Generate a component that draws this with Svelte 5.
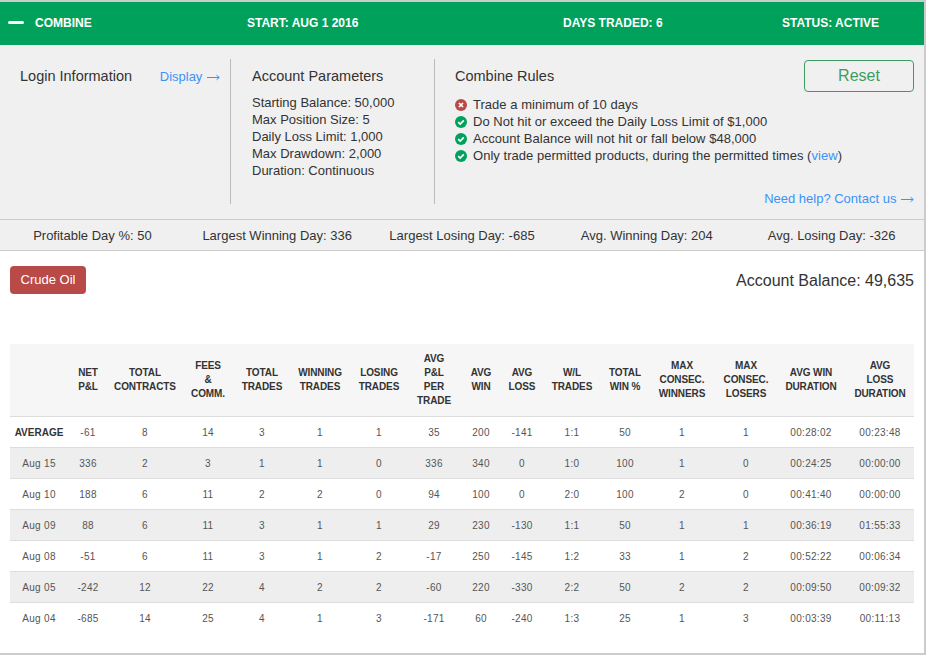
<script>
  const headers = [
    [],
    ['NET', 'P&L'],
    ['TOTAL', 'CONTRACTS'],
    ['FEES', '&', 'COMM.'],
    ['TOTAL', 'TRADES'],
    ['WINNING', 'TRADES'],
    ['LOSING', 'TRADES'],
    ['AVG', 'P&L', 'PER', 'TRADE'],
    ['AVG', 'WIN'],
    ['AVG', 'LOSS'],
    ['W/L', 'TRADES'],
    ['TOTAL', 'WIN %'],
    ['MAX', 'CONSEC.', 'WINNERS'],
    ['MAX', 'CONSEC.', 'LOSERS'],
    ['AVG WIN', 'DURATION'],
    ['AVG', 'LOSS', 'DURATION'],
  ];
  const widths = [58, 40, 74, 52, 56, 60, 58, 52, 42, 40, 60, 46, 68, 60, 70, 68];
  const rows = [
    ['AVERAGE', -61, 8, 14, 3, 1, 1, 35, 200, -141, '1:1', 50, 1, 1, '00:28:02', '00:23:48'],
    ['Aug 15', 336, 2, 3, 1, 1, 0, 336, 340, 0, '1:0', 100, 1, 0, '00:24:25', '00:00:00'],
    ['Aug 10', 188, 6, 11, 2, 2, 0, 94, 100, 0, '2:0', 100, 2, 0, '00:41:40', '00:00:00'],
    ['Aug 09', 88, 6, 11, 3, 1, 1, 29, 230, -130, '1:1', 50, 1, 1, '00:36:19', '01:55:33'],
    ['Aug 08', -51, 6, 11, 3, 1, 2, -17, 250, -145, '1:2', 33, 1, 2, '00:52:22', '00:06:34'],
    ['Aug 05', -242, 12, 22, 4, 2, 2, -60, 220, -330, '2:2', 50, 2, 2, '00:09:50', '00:09:32'],
    ['Aug 04', -685, 14, 25, 4, 1, 3, -171, 60, -240, '1:3', 25, 1, 3, '00:03:39', '00:11:13'],
  ];
  const params = [
    'Starting Balance: 50,000',
    'Max Position Size: 5',
    'Daily Loss Limit: 1,000',
    'Max Drawdown: 2,000',
    'Duration: Continuous',
  ];
  const stats = [
    'Profitable Day %: 50',
    'Largest Winning Day: 336',
    'Largest Losing Day: -685',
    'Avg. Winning Day: 204',
    'Avg. Losing Day: -326',
  ];
</script>

{#snippet okIcon()}
  <svg class="ico" viewBox="0 0 12 12"><circle cx="6" cy="6" r="6" fill="#00a25b" /><path d="M3.2 6.1l2 2 3.6-3.7" stroke="#fff" stroke-width="1.7" fill="none" /></svg>
{/snippet}

{#snippet arrow()}
  <svg class="arrow" viewBox="0 0 13 7"><path d="M0 3.5h12M9.5 1.2l2.8 2.3-2.8 2.3" stroke="#3b93f7" fill="none" /></svg>
{/snippet}

<div class="page">
  <header class="topbar">
    <span class="dash"></span>
    <span class="t-name">COMBINE</span>
    <span class="t-start">START: AUG 1 2016</span>
    <span class="t-days">DAYS TRADED: 6</span>
    <span>STATUS: ACTIVE</span>
  </header>

  <section class="panel">
    <div class="col login">
      <h3>Login Information</h3>
      <a class="link display">Display {@render arrow()}</a>
    </div>
    <div class="col account">
      <h3>Account Parameters</h3>
      <ul>
        {#each params as p}
          <li>{p}</li>
        {/each}
      </ul>
    </div>
    <div class="col rules">
      <div class="rules-head">
        <h3>Combine Rules</h3>
        <button class="reset">Reset</button>
      </div>
      <ul>
        <li>
          <svg class="ico" viewBox="0 0 12 12"><circle cx="6" cy="6" r="6" fill="#b94a48" /><path d="M4 4l4 4M8 4l-4 4" stroke="#fff" stroke-width="1.7" fill="none" /></svg>
          <span>Trade a minimum of 10 days</span>
        </li>
        <li>
          {@render okIcon()}
          <span>Do Not hit or exceed the Daily Loss Limit of $1,000</span>
        </li>
        <li>
          {@render okIcon()}
          <span>Account Balance will not hit or fall below $48,000</span>
        </li>
        <li>
          {@render okIcon()}
          <span>Only trade permitted products, during the permitted times (<a class="link">view</a>)</span>
        </li>
      </ul>
      <a class="link help">Need help? Contact us {@render arrow()}</a>
    </div>
  </section>

  <section class="stats">
    {#each stats as s}
      <span>{s}</span>
    {/each}
  </section>

  <section class="balance-row">
    <button class="crude">Crude Oil</button>
    <span class="balance">Account Balance: 49,635</span>
  </section>

  <table>
    <colgroup>
      {#each widths as w}
        <col style="width: {w}px" />
      {/each}
    </colgroup>
    <thead>
      <tr>
        {#each headers as h}
          <th>
            {#each h as line}
              <div>{line}</div>
            {/each}
          </th>
        {/each}
      </tr>
    </thead>
    <tbody>
      {#each rows as row, i}
        <tr class:odd={i % 2 === 1}>
          {#each row as cell, j}
            <td class:avg={i === 0 && j === 0}>{cell}</td>
          {/each}
        </tr>
      {/each}
    </tbody>
  </table>
</div>

<style>
  :global(body) {
    background: #fff;
    font-family: 'Liberation Sans', Arial, sans-serif;
  }
  .page {
    width: 926px;
    height: 655px;
    box-sizing: border-box;
    border-top: 2px solid #ccc;
    border-right: 2px solid #ccc;
    border-bottom: 2px solid #ccc;
    overflow: hidden;
    color: #333;
  }
  .topbar {
    display: flex;
    align-items: center;
    height: 43px;
    box-sizing: border-box;
    padding: 0 0 2px 8px;
    background: #00a25b;
    color: #fff;
    font-size: 12px;
    font-weight: bold;
  }
  .dash {
    width: 16px;
    height: 3px;
    margin: -1px 11px 0 0;
    border-radius: 2px;
    background: #fff;
  }
  .t-name { width: 212px; }
  .t-start { width: 316px; }
  .t-days { width: 219px; }

  .panel {
    display: flex;
    height: 175px;
    box-sizing: border-box;
    padding-top: 14px;
    background: #f0f0f0;
    border-bottom: 1px solid #ccc;
    font-size: 13px;
    line-height: 17px;
  }
  .col {
    height: 145px;
    box-sizing: border-box;
  }
  .col h3 {
    margin: 0;
    padding-top: 8px;
    font-size: 14.5px;
    font-weight: normal;
    line-height: 18px;
  }
  .col ul {
    margin: 0;
    padding: 0;
    list-style: none;
  }
  .login {
    display: flex;
    justify-content: space-between;
    align-items: flex-start;
    width: 231px;
    padding: 0 10px 0 20px;
    border-right: 1px solid #bbb;
  }
  .account {
    width: 204px;
    padding-left: 21px;
    border-right: 1px solid #bbb;
  }
  .account ul {
    margin-top: 9px;
  }
  .rules {
    display: flex;
    flex-direction: column;
    flex: 1;
    padding: 0 10px 0 20px;
  }
  .rules-head {
    display: flex;
    justify-content: space-between;
    align-items: flex-start;
    height: 33px;
  }
  .rules ul {
    margin-top: 4px;
  }
  .rules li {
    display: flex;
    align-items: center;
    letter-spacing: 0.03px;
  }
  .ico {
    width: 12px;
    height: 12px;
    margin-right: 6px;
    flex: none;
  }
  .arrow {
    width: 13px;
    height: 7px;
    margin-left: 1px;
  }
  .link {
    color: #3b93f7;
  }
  .display {
    padding-top: 9px;
  }
  .help {
    margin: auto 0 -3px 0;
    align-self: flex-end;
  }
  .reset {
    width: 110px;
    height: 32px;
    margin-top: 1px;
    padding: 0;
    border: 1px solid #3d9c63;
    border-radius: 4px;
    background: transparent;
    color: #3d9c63;
    font: 16px 'Liberation Sans', Arial, sans-serif;
  }
  .stats {
    display: grid;
    grid-template-columns: repeat(5, 1fr);
    height: 31px;
    box-sizing: border-box;
    background: #f0f0f0;
    border-bottom: 1px solid #ccc;
    font-size: 13px;
    line-height: 32px;
    text-align: center;
  }
  .balance-row {
    display: flex;
    justify-content: space-between;
    align-items: flex-start;
    height: 78px;
    padding: 15px 10px 0;
  }
  .crude {
    width: 76px;
    height: 28px;
    padding: 0 0 2px;
    border: none;
    border-radius: 4px;
    background: #b94a48;
    color: #fff;
    font: 13px 'Liberation Sans', Arial, sans-serif;
  }
  .balance {
    font-size: 16px;
    line-height: 29px;
  }
  table {
    width: 904px;
    margin-left: 10px;
    table-layout: fixed;
    border-collapse: collapse;
    font-size: 10px;
    letter-spacing: 0.3px;
    color: #555;
  }
  th {
    height: 72px;
    padding: 0;
    background: #f6f6f6;
    border-bottom: 1px solid #ddd;
    color: #333;
    font-weight: bold;
    line-height: 14px;
    letter-spacing: -0.1px;
  }
  td {
    height: 30px;
    padding: 0;
    text-align: center;
    border-bottom: 1px solid #ddd;
  }
  tr:last-child td {
    border-bottom: none;
  }
  tr.odd td {
    background: #eee;
  }
  td.avg {
    font-weight: bold;
    color: #333;
    letter-spacing: 0;
  }
</style>
